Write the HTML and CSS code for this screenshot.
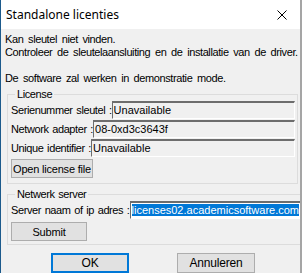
FILE: index.html
```html
<!DOCTYPE html>
<html lang="nl">
<head>
  <meta charset="UTF-8">
  <title>Standalone licenties</title>
  <link rel="stylesheet" href="styles.css">
</head>
<body>

  <div class="window">
    <div class="titlebar">
      <span class="caption">Standalone licenties</span>
      <span class="close">
        <svg width="10" height="10" viewBox="0 0 10 10">
          <path d="M0.5 0.5 L9.5 9.5 M9.5 0.5 L0.5 9.5" stroke="#000" stroke-width="1" fill="none"/>
        </svg>
      </span>
    </div>

    <div class="content">
      <p class="msg">Kan sleutel niet vinden.<br>Controleer de sleutelaansluiting en de installatie van de driver.</p>
      <p class="msg last">De software zal werken in demonstratie mode.</p>

      <!-- License -->
      <fieldset class="group">
        <legend>License</legend>
        <div class="row">
          <label>Serienummer sleutel :</label>
          <div class="field">Unavailable</div>
        </div>
        <div class="row">
          <label>Network adapter :</label>
          <div class="field">08-0xd3c3643f</div>
        </div>
        <div class="row">
          <label>Unique identifier :</label>
          <div class="field">Unavailable</div>
        </div>
        <button class="btn btn-open">Open license file</button>
      </fieldset>

      <!-- Netwerk server -->
      <fieldset class="group server">
        <legend>Netwerk server</legend>
        <div class="row">
          <label>Server naam of ip adres :</label>
          <div class="field edit"><span class="sel">licenses02.academicsoftware.com</span></div>
        </div>
        <button class="btn btn-submit">Submit</button>
      </fieldset>

      <div class="actions">
        <button class="btn btn-default">OK</button>
        <button class="btn">Annuleren</button>
      </div>
    </div>
  </div>

</body>
</html>
```

FILE: styles.css
```css
html, body {
  margin: 0;
  padding: 0;
  background: #f0f0f0;
}

body {
  font-family: "Liberation Sans", Arial, sans-serif;
  font-size: 11px;
  letter-spacing: -0.4px;
  word-spacing: 1px;
  color: #000;
}

.window {
  width: 302px;
  height: 273px;
  box-sizing: border-box;
  border-left: 1px solid #1c5a8c;
  border-right: 2px solid #a5a5a5;
  background: #f0f0f0;
  overflow: hidden;
}

/* Title bar */
.titlebar {
  height: 29px;
  background: #ffffff;
  display: flex;
  align-items: center;
  justify-content: space-between;
  padding: 0 13px 0 5px;
}

.caption {
  font-family: "Noto Sans", sans-serif;
  font-size: 12px;
  letter-spacing: 0;
  word-spacing: 0;
  color: #000;
}

.close {
  display: flex;
}

.content {
  padding: 4px 2px 0 4px;
}

.msg {
  margin: 0 0 13px 0;
  line-height: 13px;
  word-spacing: 2px;
}

.msg.last {
  margin-bottom: 3px;
}

/* Group boxes */
.group {
  border: 1px solid #dcdcdc;
  margin: 0 0 0 2px;
  padding: 0 2px 5px 3px;
}

.group + .group {
  margin-top: 4px;
}

.group.server {
  padding-bottom: 3px;
}

.group legend {
  padding: 0 2px;
  margin-left: 4px;
  line-height: 13px;
}

.row {
  display: flex;
  align-items: center;
  margin-bottom: 1px;
}

.row label {
  white-space: nowrap;
}

.field {
  flex: 1;
  height: 18px;
  box-sizing: border-box;
  border-style: solid;
  border-width: 2px 1px 1px 1px;
  border-color: #6d6d6d #ffffff #ffffff #6d6d6d;
  padding: 0 1px;
  line-height: 15px;
  letter-spacing: 0;
  word-spacing: 0;
  white-space: nowrap;
  overflow: hidden;
}

.edit {
  background: #ffffff;
}

.sel {
  background: #0078d7;
  color: #ffffff;
}

/* Buttons */
.btn {
  font-family: "Liberation Sans", Arial, sans-serif;
  font-size: 11px;
  letter-spacing: -0.2px;
  background: #e1e1e1;
  border: 1px solid #adadad;
  height: 19px;
  padding: 0;
  color: #000;
}

.btn-open {
  width: 82px;
  margin-top: 1px;
}

.btn-submit {
  width: 76px;
  margin-top: 2px;
}

.actions {
  display: flex;
  padding-left: 46px;
  margin-top: 8px;
  gap: 48px;
}

.actions .btn {
  width: 78px;
  height: 20px;
  font-size: 12px;
}

.btn-default {
  border: 2px solid #0078d7;
}
```
